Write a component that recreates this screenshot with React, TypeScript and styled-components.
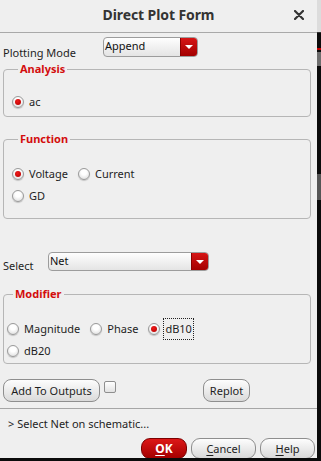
import React, { useState } from 'react';
import styled, { createGlobalStyle } from 'styled-components';

const GlobalStyle = createGlobalStyle`
  html, body {
    margin: 0;
    padding: 0;
    background: #0b0b0b;
  }
  body {
    font-family: 'Noto Sans', 'Open Sans', sans-serif;
    font-size: 11px;
    color: #1e1e1e;
  }
`;

const Screen = styled.div`
  display: flex;
  width: 321px;
  height: 461px;
  background: #0b0b0b;
  overflow: hidden;
`;

const Dialog = styled.div`
  width: 317px;
  height: 458px;
  flex: none;
  display: flex;
  flex-direction: column;
  background: #efefef;
  overflow: hidden;
`;

const EdgeStrip = styled.div`
  flex: 1;
  display: flex;
  flex-direction: column;
`;

const EdgeTop = styled.div`
  height: 32px;
  background: #dcdcdc;
  border-bottom: 1px solid #333;
`;

const EdgeBand = styled.div<{ $top: number; $color: string; $h: number }>`
  margin-top: ${p => p.$top}px;
  height: ${p => p.$h}px;
  background: ${p => p.$color};
`;

const TitleBar = styled.div`
  height: 32px;
  flex: none;
  display: flex;
  align-items: flex-start;
  justify-content: center;
  border-bottom: 1px solid #a9a9a9;
  position: relative;
`;

const Title = styled.div`
  padding-top: 5px;
  font-size: 14px;
  line-height: 19px;
  font-weight: 700;
  color: #333;
  letter-spacing: -0.1px;
`;

const CloseButton = styled.button`
  position: absolute;
  right: 13px;
  top: 9px;
  width: 11px;
  height: 11px;
  padding: 0;
  border: none;
  background: none;
  display: flex;
  align-items: center;
  justify-content: center;
`;

const Form = styled.div`
  padding: 0 6px 0 3px;
  display: flex;
  flex-direction: column;
`;

const FieldRow = styled.div<{ $mt: number }>`
  display: flex;
  align-items: flex-start;
  margin-top: ${p => p.$mt}px;
`;

const FieldLabel = styled.div<{ $width: number; $pt: number }>`
  width: ${p => p.$width}px;
  padding-top: ${p => p.$pt}px;
  line-height: 15px;
  flex: none;
`;

const Combo = styled.div<{ $width: number; $height: number }>`
  width: ${p => p.$width}px;
  height: ${p => p.$height}px;
  box-sizing: border-box;
  display: flex;
  border: 1px solid #9c9c9c;
  border-radius: 4px;
  background: linear-gradient(#fefefe, #e4e4e4);
  overflow: hidden;
`;

const ComboText = styled.div`
  flex: 1;
  padding-left: 1px;
  line-height: 15px;
  color: #111;
`;

const ComboArrow = styled.div`
  width: 16px;
  flex: none;
  display: flex;
  align-items: center;
  justify-content: center;
  background: linear-gradient(#d61515, #a30000);
  border-left: 1px solid #8a0000;
`;

const Triangle = styled.div`
  width: 0;
  height: 0;
  border-left: 4px solid transparent;
  border-right: 4px solid transparent;
  border-top: 4px solid #fff;
`;

const Group = styled.fieldset<{ $mt: number; $pt: number; $pb: number; $pl: number }>`
  margin: ${p => p.$mt}px 0 0 0;
  padding: ${p => p.$pt}px 8px ${p => p.$pb}px ${p => p.$pl}px;
  border: 1px solid #b6b6b6;
  border-radius: 4px;
  min-width: 0;
  display: flex;
  flex-direction: column;
  gap: 6px;
`;

const Legend = styled.legend`
  margin-left: 6px;
  padding: 0 2px;
  font-size: 11px;
  line-height: 14px;
  font-weight: 700;
  color: #d30d0d;
`;

const RadioRow = styled.div`
  display: flex;
  align-items: center;
  gap: 10px;
  height: 16px;
`;

const RadioItem = styled.label`
  display: flex;
  align-items: center;
  gap: 5px;
  cursor: pointer;
`;

const RadioDot = styled.span<{ $checked: boolean }>`
  width: 12px;
  height: 12px;
  box-sizing: border-box;
  border-radius: 50%;
  border: 1px solid #9a9a9a;
  background: radial-gradient(circle at 50% 35%, #ffffff 30%, #d6d6d6 100%);
  box-shadow: 0 1px 1px rgba(0, 0, 0, 0.18);
  display: flex;
  align-items: center;
  justify-content: center;
  flex: none;

  &::after {
    content: '';
    width: 6px;
    height: 6px;
    border-radius: 50%;
    background: radial-gradient(circle at 40% 35%, #f01a1a, #b00000);
    display: ${p => (p.$checked ? 'block' : 'none')};
  }
`;

const RadioText = styled.span<{ $focus?: boolean }>`
  line-height: 16px;
  color: #1e1e1e;
  border: 1px dotted ${p => (p.$focus ? '#222' : 'transparent')};
  padding: 2px 1px;
  margin: -3px -2px;
`;

const ButtonRow = styled.div`
  display: flex;
  align-items: flex-start;
  margin-top: 15px;
`;

const PillButton = styled.button<{ $width: number; $ml?: number }>`
  width: ${p => p.$width}px;
  height: 23px;
  margin-left: ${p => p.$ml ?? 0}px;
  padding: 0;
  border: 1px solid #8e8e8e;
  border-radius: 8px;
  background: linear-gradient(#fdfdfd, #dadada);
  font-family: inherit;
  font-size: 11px;
  color: #1e1e1e;
  flex: none;
`;

const CheckBox = styled.span`
  width: 12px;
  height: 12px;
  box-sizing: border-box;
  margin: 2px 0 0 4px;
  border: 1px solid #8e8e8e;
  border-radius: 2px;
  background: linear-gradient(#ffffff, #e2e2e2);
  flex: none;
`;

const Footer = styled.div`
  margin-top: 6px;
  border-top: 1px solid #a6a6a6;
  display: flex;
  flex-direction: column;
`;

const Status = styled.div`
  padding: 7px 0 0 8px;
  line-height: 15px;
  color: #1e1e1e;
`;

const ActionRow = styled.div`
  display: flex;
  justify-content: flex-end;
  gap: 4px;
  padding-right: 2px;
  margin-top: 7px;
`;

const ActionButton = styled.button<{ $width: number; $primary?: boolean }>`
  width: ${p => p.$width}px;
  height: 21px;
  padding: 0;
  border: 1px solid ${p => (p.$primary ? '#7c0000' : '#8e8e8e')};
  border-radius: 9px;
  background: ${p => (p.$primary ? 'linear-gradient(#dd1717, #a40000)' : 'linear-gradient(#fdfdfd, #d9d9d9)')};
  color: ${p => (p.$primary ? '#fff' : '#1e1e1e')};
  font-family: inherit;
  font-size: ${p => (p.$primary ? 12 : 11)}px;
  line-height: 15px;
  font-weight: ${p => (p.$primary ? 700 : 400)};
  flex: none;

  u {
    text-underline-offset: 2px;
  }
`;

type Opt = { id: string; label: string };

const RadioGroup = ({
  rows,
  value,
  onChange,
  focus,
}: {
  rows: Opt[][];
  value: string;
  onChange: (v: string) => void;
  focus?: string;
}) => (
  <>
    {rows.map((row, i) => (
      <RadioRow key={i}>
        {row.map(o => (
          <RadioItem key={o.id} onClick={() => onChange(o.id)}>
            <RadioDot $checked={value === o.id} />
            <RadioText $focus={focus === o.id}>{o.label}</RadioText>
          </RadioItem>
        ))}
      </RadioRow>
    ))}
  </>
);

const App = () => {
  const [analysis, setAnalysis] = useState('ac');
  const [func, setFunc] = useState('voltage');
  const [modifier, setModifier] = useState('db10');

  return (
    <Screen>
      <GlobalStyle />
      <Dialog>
        <TitleBar>
          <Title>Direct Plot Form</Title>
          <CloseButton aria-label="close">
            <svg width="10" height="10" viewBox="0 0 10 10">
              <path d="M1 1 L9 9 M9 1 L1 9" stroke="#333" strokeWidth="2.2" strokeLinecap="round" />
            </svg>
          </CloseButton>
        </TitleBar>

        <Form>
          <FieldRow $mt={4}>
            <FieldLabel $width={100} $pt={8}>Plotting Mode</FieldLabel>
            <Combo $width={95} $height={20}>
              <ComboText>Append</ComboText>
              <ComboArrow>
                <Triangle />
              </ComboArrow>
            </Combo>
          </FieldRow>

          <Group $mt={2} $pt={18} $pb={6} $pl={8}>
            <Legend>Analysis</Legend>
            <RadioGroup rows={[[{ id: 'ac', label: 'ac' }]]} value={analysis} onChange={setAnalysis} />
          </Group>

          <Group $mt={15} $pt={20} $pb={14} $pl={8}>
            <Legend>Function</Legend>
            <RadioGroup
              rows={[
                [
                  { id: 'voltage', label: 'Voltage' },
                  { id: 'current', label: 'Current' },
                ],
                [{ id: 'gd', label: 'GD' }],
              ]}
              value={func}
              onChange={setFunc}
            />
          </Group>

          <FieldRow $mt={33}>
            <FieldLabel $width={45} $pt={6}>Select</FieldLabel>
            <Combo $width={161} $height={19}>
              <ComboText>Net</ComboText>
              <ComboArrow>
                <Triangle />
              </ComboArrow>
            </Combo>
          </FieldRow>

          <Group $mt={14} $pt={20} $pb={4} $pl={3}>
            <Legend>Modifier</Legend>
            <RadioGroup
              rows={[
                [
                  { id: 'magnitude', label: 'Magnitude' },
                  { id: 'phase', label: 'Phase' },
                  { id: 'db10', label: 'dB10' },
                ],
                [{ id: 'db20', label: 'dB20' }],
              ]}
              value={modifier}
              onChange={setModifier}
              focus="db10"
            />
          </Group>

          <ButtonRow>
            <PillButton $width={97}>Add To Outputs</PillButton>
            <CheckBox />
            <PillButton $width={47} $ml={87}>Replot</PillButton>
          </ButtonRow>
        </Form>

        <Footer>
          <Status>&gt; Select Net on schematic...</Status>
          <ActionRow>
            <ActionButton $width={46} $primary>
              <u>O</u>K
            </ActionButton>
            <ActionButton $width={65}>
              <u>C</u>ancel
            </ActionButton>
            <ActionButton $width={55}>
              <u>H</u>elp
            </ActionButton>
          </ActionRow>
        </Footer>
      </Dialog>
      <EdgeStrip>
        <EdgeTop />
        <EdgeBand $top={15} $h={2} $color="#c00000" />
        <EdgeBand $top={2} $h={14} $color="#6e6e6e" />
        <EdgeBand $top={108} $h={26} $color="#555" />
      </EdgeStrip>
    </Screen>
  );
};

export default App;
